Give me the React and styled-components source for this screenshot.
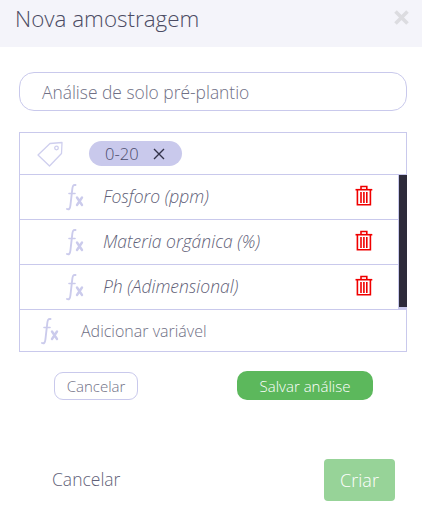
import React from "react"
import styled, { createGlobalStyle } from "styled-components"

const GlobalStyle = createGlobalStyle`
  html, body {
    margin: 0;
    padding: 0;
    background: #fff;
  }
  * {
    box-sizing: border-box;
  }
`

const Modal = styled.div`
  width: 422px;
  height: 518px;
  display: flex;
  flex-direction: column;
  overflow: hidden;
  background: #fff;
  font-family: "Open Sans", sans-serif;
  font-weight: 300;
  color: #4a4a68;
`

const Header = styled.div`
  height: 47px;
  flex: none;
  display: flex;
  justify-content: space-between;
  align-items: flex-start;
  padding: 3px 13px 0 15px;
  background: #f4f4fa;
`

const Title = styled.span`
  font-size: 22.4px;
  line-height: 32px;
  color: #4b4b63;
`

const CloseButton = styled.span`
  margin-top: 7px;
  display: flex;
  color: #dcdce0;
`

const Body = styled.div`
  flex: 1;
  display: flex;
  flex-direction: column;
  padding: 25px 15px 0 19px;
`

const NameField = styled.div`
  height: 39px;
  display: flex;
  align-items: center;
  padding: 1px 0 0 22px;
  border: 1px solid #c9c9ec;
  border-radius: 15px;
  font-size: 17.4px;
  color: #6f6f85;
`

const Table = styled.div`
  margin-top: 21px;
  border: 1px solid #c9c9ec;
  display: flex;
  flex-direction: column;
`

const TagRow = styled.div`
  height: 42px;
  display: flex;
  align-items: center;
  padding-left: 17px;
  border-bottom: 1px solid #c9c9ec;
`

const Chip = styled.div`
  width: 93px;
  height: 25px;
  margin-left: 26px;
  display: flex;
  align-items: center;
  padding-left: 16px;
  gap: 14px;
  border-radius: 13px;
  background: #c9c9ec;
  font-size: 16.5px;
  color: #4b4b6b;
`

const VariableList = styled.div`
  display: flex;
  background: #c9c9ec;
`

const Rows = styled.div`
  flex: 1;
  display: flex;
  flex-direction: column;
`

const Scrollbar = styled.div`
  width: 8px;
  height: 132px;
  margin: 0 -1px 0 1px;
  background: #2d2b3a;
`

const VariableRow = styled.div`
  height: 45px;
  display: flex;
  align-items: center;
  padding-left: 46px;
  background: #fff;
  border-bottom: 1px solid #c9c9ec;
`

const VariableName = styled.span`
  margin: 0 0 2px 19px;
  flex: 1;
  font-size: 17.5px;
  font-style: italic;
  color: #5f5f78;
`

const TrashButton = styled.span`
  display: flex;
  margin: 0 25px 4px 0;
`

const AddRow = styled.div`
  height: 41px;
  display: flex;
  align-items: center;
  padding-left: 21px;
  background: #fff;
`

const AddLabel = styled.span`
  margin-left: 22px;
  font-size: 16px;
  color: #6f6f85;
`

const FormActions = styled.div`
  margin-top: 19px;
  display: flex;
  align-items: center;
  padding-left: 35px;
`

const OutlineButton = styled.span`
  width: 84px;
  height: 28px;
  display: flex;
  align-items: center;
  justify-content: center;
  border: 1px solid #c9c9ec;
  border-radius: 9px;
  font-size: 15px;
  color: #6f6f85;
`

const SaveButton = styled.span`
  width: 136px;
  height: 29px;
  margin-left: 99px;
  display: flex;
  align-items: center;
  justify-content: center;
  border-radius: 10px;
  background: #5cb85c;
  font-size: 15px;
  color: #fff;
`

const Footer = styled.div`
  margin-top: 59px;
  display: flex;
  justify-content: space-between;
  align-items: center;
  padding: 0 12px 0 33px;
`

const FooterCancel = styled.span`
  margin-bottom: 2px;
  font-size: 17.5px;
  color: #5f5f78;
`

const CreateButton = styled.span`
  width: 71px;
  height: 42px;
  display: flex;
  align-items: center;
  justify-content: center;
  border-radius: 4px;
  background: #97d398;
  font-size: 18px;
  color: #fff;
`

const TagIcon = () => (
  <svg width="26" height="26" viewBox="0 0 26 26" fill="none" stroke="#cfcfee" strokeWidth="1.3" strokeLinejoin="round">
    <path d="M1 14 L13 2.5 L25 1.5 L24.5 12.5 L12.5 25 Z" />
    <circle cx="19.5" cy="7" r="1.8" />
  </svg>
)

const FxIcon = () => (
  <svg width="18" height="28" viewBox="0 0 18 28" fill="none" stroke="#cbcbec" strokeLinecap="round">
    <path d="M9.5 2 C7 1.5 6.6 3.5 6.3 6 L4.4 22.5 C4.1 25.5 3 27 1 26" strokeWidth="1.9" />
    <path d="M3 10.5 H9" strokeWidth="1.6" />
    <path d="M11 14.5 L16 22 M16 14.5 L11 22" strokeWidth="2.4" />
  </svg>
)

const TrashIcon = () => (
  <svg width="18" height="21" viewBox="0 0 18 21" fill="none" stroke="#f00000" strokeWidth="1.6">
    <path d="M0.5 4.7 H17.3" />
    <path d="M6 4 V1.5 H11.8 V4" />
    <path d="M2.4 5 V19.8 H15.4 V5" />
    <path d="M6 7 V18 M8.9 7 V18 M11.8 7 V18" />
  </svg>
)

const variables = ["Fosforo (ppm)", "Materia orgánica (%)", "Ph (Adimensional)"]

const App = () => {
  return (
    <Modal>
      <GlobalStyle />
      <Header>
        <Title>Nova amostragem</Title>
        <CloseButton>
          <svg width="15" height="15" viewBox="0 0 15 15" stroke="currentColor" strokeWidth="3.6">
            <path d="M1.5 1.5 L13.5 13.5 M13.5 1.5 L1.5 13.5" />
          </svg>
        </CloseButton>
      </Header>
      <Body>
        <NameField>Análise de solo pré-plantio</NameField>
        <Table>
          <TagRow>
            <TagIcon />
            <Chip>
              0-20
              <svg width="12" height="12" viewBox="0 0 12 12" stroke="#33334a" strokeWidth="1.4">
                <path d="M1 1 L11 11 M11 1 L1 11" />
              </svg>
            </Chip>
          </TagRow>
          <VariableList>
            <Rows>
              {variables.map((name) => (
                <VariableRow key={name}>
                  <FxIcon />
                  <VariableName>{name}</VariableName>
                  <TrashButton>
                    <TrashIcon />
                  </TrashButton>
                </VariableRow>
              ))}
            </Rows>
            <Scrollbar />
          </VariableList>
          <AddRow>
            <FxIcon />
            <AddLabel>Adicionar variável</AddLabel>
          </AddRow>
        </Table>
        <FormActions>
          <OutlineButton>Cancelar</OutlineButton>
          <SaveButton>Salvar análise</SaveButton>
        </FormActions>
        <Footer>
          <FooterCancel>Cancelar</FooterCancel>
          <CreateButton>Criar</CreateButton>
        </Footer>
      </Body>
    </Modal>
  )
}

export default App
